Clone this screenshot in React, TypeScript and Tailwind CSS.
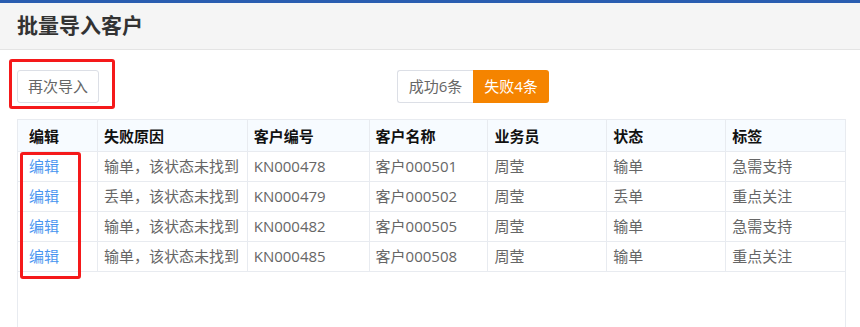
const COLS = [
  { key: 'edit', title: '编辑', w: 'w-[80px]', pad: 'pl-[11px]' },
  { key: 'reason', title: '失败原因', w: 'w-[150px]', pad: 'pl-[6px]' },
  { key: 'code', title: '客户编号', w: 'w-[122px]', pad: 'pl-[6px]' },
  { key: 'name', title: '客户名称', w: 'w-[119px]', pad: 'pl-[6px]' },
  { key: 'sales', title: '业务员', w: 'w-[119px]', pad: 'pl-[6px]' },
  { key: 'status', title: '状态', w: 'w-[119px]', pad: 'pl-[6px]' },
  { key: 'tag', title: '标签', w: 'w-[119px]', pad: 'pl-[6px]' },
];

const ROWS = [
  { reason: '输单，该状态未找到', code: 'KN000478', name: '客户000501', sales: '周莹', status: '输单', tag: '急需支持' },
  { reason: '丢单，该状态未找到', code: 'KN000479', name: '客户000502', sales: '周莹', status: '丢单', tag: '重点关注' },
  { reason: '输单，该状态未找到', code: 'KN000482', name: '客户000505', sales: '周莹', status: '输单', tag: '急需支持' },
  { reason: '输单，该状态未找到', code: 'KN000485', name: '客户000508', sales: '周莹', status: '输单', tag: '重点关注' },
];

export default function App() {
  return (
    <div
      className="w-[860px] h-[327px] overflow-hidden bg-white text-[15px]"
      style={{ fontFamily: '"Open Sans", "Noto Sans CJK SC", sans-serif' }}
    >
      <div className="h-[3px] bg-[#2a5db0]" />
      {/* Header */}
      <div className="h-[47px] bg-[#f5f5f5] border-b border-[#e4e4e4] flex items-center pl-[17px]">
        <h1 className="text-[21px] font-bold text-[#333]">批量导入客户</h1>
      </div>

      {/* Toolbar */}
      <div className="relative h-[69px] flex items-start pt-[20px] pl-[17px]">
        <div className="absolute left-[9px] top-[9px] w-[106px] h-[50px] border-[3px] border-[#f5191a] rounded-[3px]" />
        <button className="h-[33px] w-[82px] border border-[#dcdfe6] rounded-[3px] text-[#666] bg-white">
          再次导入
        </button>
        <div className="ml-[298px] flex h-[33px]">
          <div className="w-[76px] flex items-center justify-center border border-r-0 border-[#dcdfe6] rounded-l-[3px] text-[#666]">
            成功6条
          </div>
          <div className="w-[76px] flex items-center justify-center bg-[#f58400] rounded-r-[3px] text-white">
            失败4条
          </div>
        </div>
      </div>

      {/* Table */}
      <div className="relative ml-[17px] w-[829px] h-[220px] border border-[#e8ebf0]">
        <div className="absolute left-[2px] top-[32px] w-[61px] h-[127px] border-[3px] border-[#f5191a] rounded-[3px]" />
        <div className="flex h-[32px] bg-[#f7fbff] border-b border-[#e8ebf0]">
          {COLS.map((c, i) => (
            <div
              key={c.key}
              className={`${c.w} ${c.pad} pt-[2px] flex items-center font-bold text-[#111] ${i < COLS.length - 1 ? 'border-r border-[#e8ebf0]' : ''}`}
            >
              {c.title}
            </div>
          ))}
        </div>
        {ROWS.map((r, ri) => (
          <div key={ri} className="flex h-[30px] border-b border-[#e8ebf0] text-[#666]">
            {COLS.map((c, i) => (
              <div
                key={c.key}
                className={`${c.w} ${c.pad} flex items-center ${i < COLS.length - 1 ? 'border-r border-[#e8ebf0]' : ''} ${c.key === 'edit' ? 'text-[#4a96f0]' : ''}`}
              >
                {c.key === 'edit' ? '编辑' : (r as Record<string, string>)[c.key]}
              </div>
            ))}
          </div>
        ))}
      </div>
    </div>
  );
}
